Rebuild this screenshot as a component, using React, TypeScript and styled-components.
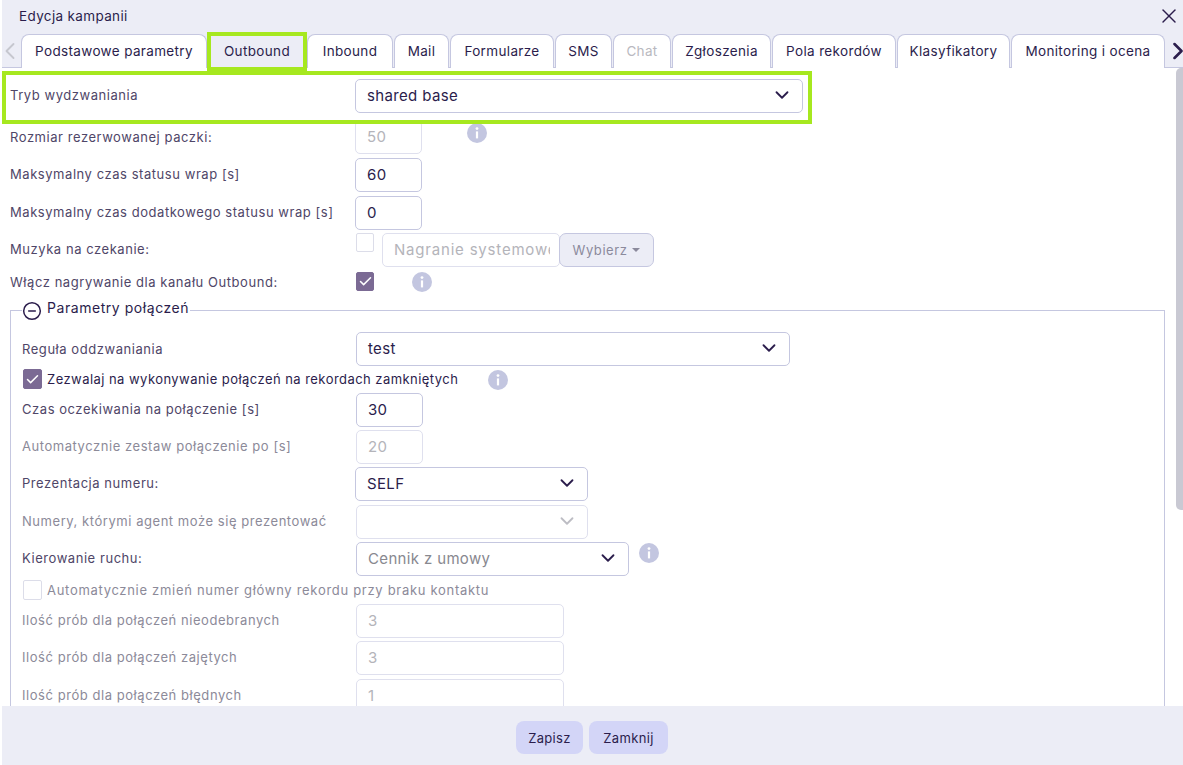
import React from "react";
import styled, { createGlobalStyle } from "styled-components";
import { Check, ChevronDown, ChevronLeft, ChevronRight, CircleMinus, X } from "lucide-react";

const GlobalStyle = createGlobalStyle`
  html, body {
    margin: 0;
    height: 100%;
    background: #fff;
    overflow: hidden;
  }
  * {
    box-sizing: border-box;
  }
`;

const Dialog = styled.div`
  height: 765px;
  margin-left: 2px;
  display: flex;
  flex-direction: column;
  font-family: Inter, "Open Sans", sans-serif;
  font-size: 13.5px;
  letter-spacing: 0.35px;
  color: #2b1d4c;
`;

const Header = styled.div`
  background: #ecedf6;
  height: 68px;
  flex: none;
  display: flex;
  flex-direction: column;
  position: relative;
  z-index: 2;
`;

const TitleBar = styled.div`
  height: 34px;
  flex: none;
  display: flex;
  align-items: center;
  justify-content: space-between;
  padding: 0 2px 2px 17px;
`;

const TabsRow = styled.div`
  height: 34px;
  display: flex;
  align-items: stretch;
  border-bottom: 1px solid #c5c7e0;
`;

const TabArrow = styled.div<{ $muted?: boolean; $end?: boolean }>`
  width: 19px;
  flex: none;
  display: flex;
  align-items: center;
  justify-content: center;
  padding: ${(p) => (p.$end ? "0 0 0 6px" : "0 3px 0 0")};
  color: ${(p) => (p.$muted ? "#c6c7cf" : "#2b1d4c")};
  svg {
    flex: none;
  }
`;

const Tabs = styled.div`
  display: flex;
  gap: 1px;
  flex: 1;
`;

const Tab = styled.div<{ $active?: boolean; $disabled?: boolean; $w: number }>`
  width: ${(p) => p.$w}px;
  height: 34px;
  flex: none;
  display: flex;
  align-items: center;
  justify-content: center;
  padding-bottom: 2px;
  white-space: nowrap;
  background: ${(p) => (p.$active ? "#ecedf6" : "#fff")};
  color: ${(p) => (p.$disabled ? "#b9b9c0" : "#2b1d4c")};
  border: 1px solid #c5c7e0;
  border-bottom: 0;
  border-radius: ${(p) => (p.$active ? "0" : "8px 8px 0 0")};
  position: relative;
  z-index: ${(p) => (p.$active ? 1 : 0)};
  &::after {
    content: "";
    display: ${(p) => (p.$active ? "block" : "none")};
    position: absolute;
    top: -3px;
    bottom: -3px;
    left: -2px;
    right: -2px;
    border: 4px solid #a6e81f;
  }
`;

const Body = styled.div`
  flex: 1;
  min-height: 0;
  position: relative;
  overflow: hidden;
  padding-top: 7px;
  background: #fff;
`;

const Scrollbar = styled.div`
  position: absolute;
  top: 0;
  right: 0;
  width: 7px;
  height: 442px;
  background: #c9c9d3;
  border-radius: 5px 0 0 5px;
`;

const Highlight = styled.div`
  width: 802px;
  height: 45px;
  margin-left: 4px;
  padding: 4px 5px 0 4px;
  display: grid;
  grid-template-columns: 345px 448px;
  align-items: start;
  outline: 4px solid #a6e81f;
  position: relative;
  z-index: 1;
`;

const Rows = styled.div`
  padding-left: 8px;
  display: flex;
  flex-direction: column;
`;

const Row = styled.div<{ $h?: number; $label?: number }>`
  display: grid;
  grid-template-columns: ${(p) => p.$label ?? 345}px 1fr;
  min-height: ${(p) => p.$h ?? 38}px;
  align-items: start;
`;

const Label = styled.div<{ $disabled?: boolean; $up?: number }>`
  line-height: 32px;
  height: 34px;
  margin-top: ${(p) => p.$up ?? 0}px;
  white-space: nowrap;
  font-size: 13px;
  letter-spacing: 0.55px;
  color: ${(p) => (p.$disabled ? "#8c8a99" : "#4f4668")};
`;

const Field = styled.div<{ $w: number; $disabled?: boolean }>`
  width: ${(p) => p.$w}px;
  height: 34px;
  flex: none;
  display: flex;
  align-items: center;
  justify-content: space-between;
  padding: 0 9px 2px 11px;
  font-size: 15px;
  background: #fff;
  color: ${(p) => (p.$disabled ? "#b4b4ba" : "#2b1d4c")};
  border: 1px solid ${(p) => (p.$disabled ? "#dfe0ee" : "#c5c7e0")};
  border-radius: 5px;
  overflow: hidden;
  white-space: nowrap;
`;

const FieldClip = styled.span`
  display: block;
  flex: 1;
  min-width: 0;
  overflow: hidden;
  letter-spacing: 0.8px;
`;

const FieldHint = styled.span`
  color: #88888f;
`;

const Controls = styled.div<{ $gap?: number; $inset?: number }>`
  display: flex;
  align-items: flex-start;
  gap: ${(p) => p.$gap ?? 8}px;
  padding-left: ${(p) => p.$inset ?? 0}px;
`;

const Box = styled.div<{ $checked?: boolean; $big?: boolean }>`
  width: ${(p) => (p.$big ? 19 : 18)}px;
  height: ${(p) => (p.$big ? 20 : 19)}px;
  flex: none;
  display: flex;
  align-items: center;
  justify-content: center;
  border-radius: 2px;
  color: #fff;
  background: ${(p) => (p.$checked ? "#7b6a94" : "#fff")};
  border: 1px solid ${(p) => (p.$checked ? "#7b6a94" : "#dcdde9")};
`;

const PickButton = styled.div`
  width: 95px;
  height: 34px;
  margin-left: -9px;
  display: flex;
  align-items: center;
  justify-content: center;
  gap: 5px;
  font-size: 13px;
  letter-spacing: 0.55px;
  color: #8b8a9c;
  background: #ecedf6;
  border: 1px solid #c5c7e0;
  border-radius: 7px;
`;

const Caret = styled.span`
  width: 0;
  height: 0;
  border-left: 4px solid transparent;
  border-right: 4px solid transparent;
  border-top: 4px solid #8b8a9c;
`;

const InfoSvg = styled.svg<{ $ml?: number; $mt?: number }>`
  flex: none;
  display: block;
  margin-left: ${(p) => p.$ml ?? 0}px;
  margin-top: ${(p) => p.$mt ?? 0}px;
`;

const Fieldset = styled.div`
  margin: 4px 0 0 8px;
  width: 1155px;
  border: 1px solid #c5c7e0;
  border-bottom: 0;
  padding: 21px 0 0 11px;
  position: relative;
`;

const Legend = styled.div`
  position: absolute;
  top: -10px;
  left: 11px;
  padding-right: 1px;
  display: flex;
  align-items: center;
  gap: 5px;
  height: 20px;
  background: #fff;
  font-size: 14px;
  letter-spacing: 0.55px;
  color: #2b1d4c;
`;

const LegendText = styled.span`
  margin-bottom: 8px;
`;

const CheckRow = styled.div<{ $disabled?: boolean; $ls?: number }>`
  display: flex;
  align-items: flex-start;
  gap: 5px;
  height: 25px;
  padding: 1px 0 0 1px;
  line-height: 20px;
  white-space: nowrap;
  font-size: 13px;
  letter-spacing: ${(p) => p.$ls ?? 0.45}px;
  color: ${(p) => (p.$disabled ? "#8c8a99" : "#2b1d4c")};
`;

const Footer = styled.div`
  height: 59px;
  flex: none;
  background: #ecedf6;
  display: flex;
  justify-content: center;
  align-items: flex-start;
  gap: 6px;
  padding: 15px 1px 0 0;
`;

const FootButton = styled.div<{ $w: number }>`
  width: ${(p) => p.$w}px;
  height: 33px;
  display: flex;
  align-items: center;
  justify-content: center;
  background: #d3d5f7;
  border-radius: 8px;
  font-size: 13px;
`;

const Info = ({ ml, mt }: { ml?: number; mt?: number }) => (
  <InfoSvg width="20" height="20" viewBox="0 0 20 20" $ml={ml} $mt={mt}>
    <circle cx="10" cy="10" r="10" fill="#c3c6e0" />
    <rect x="8.9" y="8.4" width="2.2" height="7" fill="#fff" />
    <circle cx="10" cy="5.6" r="1.4" fill="#fff" />
  </InfoSvg>
);

const Chevron = ({ muted }: { muted?: boolean }) => (
  <ChevronDown size={22} strokeWidth={2} color={muted ? "#bdbdc4" : "#2b1d4c"} />
);

const Tick = () => <Check size={15} strokeWidth={2.4} />;

const tabs = [
  { name: "Podstawowe parametry", w: 186 },
  { name: "Outbound", w: 98, active: true },
  { name: "Inbound", w: 86 },
  { name: "Mail", w: 55 },
  { name: "Formularze", w: 104 },
  { name: "SMS", w: 57 },
  { name: "Chat", w: 58, disabled: true },
  { name: "Zgłoszenia", w: 99 },
  { name: "Pola rekordów", w: 124 },
  { name: "Klasyfikatory", w: 113 },
  { name: "Monitoring i ocena", w: 154 },
];

const App = () => {
  return (
    <Dialog>
      <GlobalStyle />
      <Header>
        <TitleBar>
          <span>Edycja kampanii</span>
          <X size={24} strokeWidth={1.4} />
        </TitleBar>
        <TabsRow>
          <TabArrow $muted>
            <ChevronLeft size={28} strokeWidth={1.6} />
          </TabArrow>
          <Tabs>
            {tabs.map((t) => (
              <Tab key={t.name} $w={t.w} $active={t.active} $disabled={t.disabled}>
                {t.name}
              </Tab>
            ))}
          </Tabs>
          <TabArrow $end>
            <ChevronRight size={28} strokeWidth={2.2} />
          </TabArrow>
        </TabsRow>
      </Header>

      <Body>
        <Scrollbar />
        <Highlight>
          <Label>Tryb wydzwaniania</Label>
          <Field $w={448}>
            shared base
            <Chevron />
          </Field>
        </Highlight>

        <Rows>
          <Row>
            <Label $up={1}>Rozmiar rezerwowanej paczki:</Label>
            <Controls $gap={45}>
              <Field $w={67} $disabled>50</Field>
              <Info mt={3} />
            </Controls>
          </Row>
          <Row>
            <Label>Maksymalny czas statusu wrap [s]</Label>
            <Field $w={67}>60</Field>
          </Row>
          <Row $h={37}>
            <Label>Maksymalny czas dodatkowego statusu wrap [s]</Label>
            <Field $w={67}>0</Field>
          </Row>
          <Row $h={39}>
            <Label>Muzyka na czekanie:</Label>
            <Controls $inset={1}>
              <Box />
              <Field $w={178} $disabled>
                <FieldClip>Nagranie systemowe</FieldClip>
              </Field>
              <PickButton>
                Wybierz <Caret />
              </PickButton>
            </Controls>
          </Row>
          <Row $h={34}>
            <Label $up={-6}>Włącz nagrywanie dla kanału Outbound:</Label>
            <Controls $gap={38} $inset={1}>
              <Box $checked>
                <Tick />
              </Box>
              <Info />
            </Controls>
          </Row>
        </Rows>

        <Fieldset>
          <Legend>
            <CircleMinus size={20} strokeWidth={1.8} color="#2b1d4c" />
            <LegendText>Parametry połączeń</LegendText>
          </Legend>
          <Row $h={36} $label={334}>
            <Label $up={1}>Reguła oddzwaniania</Label>
            <Field $w={434}>
              test
              <Chevron />
            </Field>
          </Row>
          <CheckRow>
            <Box $checked $big>
              <Tick />
            </Box>
            Zezwalaj na wykonywanie połączeń na rekordach zamkniętych
            <Info ml={25} mt={1} />
          </CheckRow>
          <Row $h={37} $label={334}>
            <Label>Czas oczekiwania na połączenie [s]</Label>
            <Field $w={67}>30</Field>
          </Row>
          <Row $h={37} $label={334}>
            <Label $disabled>Automatycznie zestaw połączenie po [s]</Label>
            <Field $w={67} $disabled>20</Field>
          </Row>
          <Row $h={38} $label={333}>
            <Label>Prezentacja numeru:</Label>
            <Field $w={233}>
              SELF
              <Chevron />
            </Field>
          </Row>
          <Row $h={37} $label={334}>
            <Label $disabled>Numery, którymi agent może się prezentować</Label>
            <Field $w={232} $disabled>
              <span />
              <Chevron muted />
            </Field>
          </Row>
          <Row $h={37} $label={334}>
            <Label>Kierowanie ruchu:</Label>
            <Controls $gap={10}>
              <Field $w={273}>
                <FieldHint>Cennik z umowy</FieldHint>
                <Chevron />
              </Field>
              <Info mt={1} />
            </Controls>
          </Row>
          <CheckRow $disabled $ls={0.7}>
            <Box $big />
            Automatycznie zmień numer główny rekordu przy braku kontaktu
          </CheckRow>
          <Row $h={37} $label={334}>
            <Label $disabled>Ilość prób dla połączeń nieodebranych</Label>
            <Field $w={208} $disabled>3</Field>
          </Row>
          <Row $h={38} $label={334}>
            <Label $disabled>Ilość prób dla połączeń zajętych</Label>
            <Field $w={208} $disabled>3</Field>
          </Row>
          <Row $h={38} $label={334}>
            <Label $disabled>Ilość prób dla połączeń błędnych</Label>
            <Field $w={208} $disabled>1</Field>
          </Row>
        </Fieldset>
      </Body>

      <Footer>
        <FootButton $w={67}>Zapisz</FootButton>
        <FootButton $w={79}>Zamknij</FootButton>
      </Footer>
    </Dialog>
  );
};

export default App;
